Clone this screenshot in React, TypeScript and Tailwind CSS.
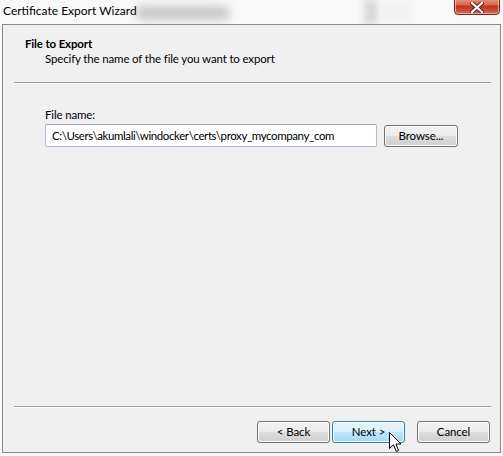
import React from "react";

const font = { fontFamily: 'Lato, "Noto Sans", sans-serif' };

function Btn({ children, hot, className = "" }: { children: React.ReactNode; hot?: boolean; className?: string }) {
  return (
    <div
      className={
        "flex h-[22px] w-[73px] items-center justify-center rounded-[3px] border text-[11.5px] tracking-[-0.1px] text-black shadow-[inset_0_0_0_1px_#fcfcfc] " +
        (hot
          ? "border-[#3c7fb1] bg-[linear-gradient(to_bottom,#eaf6fd_0%,#d9f0fc_50%,#bee6fd_50%,#a7d9f5_100%)] "
          : "border-[#707070] bg-[linear-gradient(to_bottom,#f2f2f2_0%,#ebebeb_50%,#dddddd_50%,#cfcfcf_100%)] ") +
        className
      }
    >
      {children}
    </div>
  );
}

export default function App() {
  return (
    <div className="relative h-[456px] w-[503px] overflow-hidden bg-[#f7f7f7]" style={font}>
      {/* title bar */}
      <div className="relative flex h-[24px] items-center overflow-hidden bg-[#f8f8f8]">
        <div className="absolute left-[135px] top-[6px] h-[14px] w-[95px] rounded-full bg-[#c9c9c9] blur-[4px]" />
        <div className="absolute left-[365px] top-0 h-[24px] w-[12px] bg-[#d2d2d2] blur-[4px]" />
        <div className="absolute left-[382px] top-0 h-[24px] w-[30px] bg-[#f2f2f2] blur-[3px]" />
        <span className="relative ml-[3px] -mt-[3px] text-[12px] text-black">Certificate Export Wizard</span>
        <div className="absolute left-[454px] top-[-4px] flex h-[19px] w-[46px] items-center justify-center rounded-b-[4px] border border-[#6e2a20] bg-[linear-gradient(to_bottom,#e9a99b_0%,#d7664f_45%,#c2341c_55%,#d0685a_100%)] shadow-[inset_0_0_0_1px_rgba(255,220,210,0.6)]">
          <svg width="14" height="11" viewBox="0 0 14 11" className="mt-[4px]">
            <path d="M2 1 L12 10 M12 1 L2 10" stroke="#5a1a10" strokeWidth="4" strokeLinecap="square" />
            <path d="M2 1 L12 10 M12 1 L2 10" stroke="#ffffff" strokeWidth="2.2" strokeLinecap="square" />
          </svg>
        </div>
      </div>

      {/* dialog */}
      <div className="ml-[2px] flex h-[429px] w-[499px] flex-col border border-[#8a8a8a] bg-[#f0f0f0]">
        <div className="h-[57px] pt-[11px] text-[11.5px] leading-[15px] tracking-[-0.15px] text-black">
          <div className="ml-[22px] font-bold">File to Export</div>
          <div className="ml-[42px]">Specify the name of the file you want to export</div>
        </div>
        <div className="ml-[11px] h-[2px] w-[477px] border-t border-[#a0a0a0] bg-white" />

        <div className="ml-[42px] mt-[23px] text-[11.5px] leading-[16px] tracking-[-0.15px] text-black">File name:</div>
        <div className="ml-[42px] mt-[1px] flex items-start">
          <div className="flex h-[23px] w-[332px] items-center rounded-[2px] border border-[#a9bdd6] border-t-[#95a9c4] bg-white pl-[6px] text-[11.5px] tracking-[-0.4px] text-black">
            C:\Users\akumlali\windocker\certs\proxy_mycompany_com
          </div>
          <Btn className="ml-[7px] mt-[1px] h-[21px] w-[74px]">Browse...</Btn>
        </div>

        <div className="flex-1" />

        <div className="ml-[11px] h-[2px] w-[477px] border-t border-[#a0a0a0] bg-white" />
        <div className="mb-[9px] mr-[10px] mt-[13px] flex justify-end">
          <Btn>&lt; Back</Btn>
          <Btn hot className="ml-[2px]">Next &gt;</Btn>
          <Btn className="ml-[12px]">Cancel</Btn>
        </div>
      </div>

      {/* mouse cursor */}
      <svg className="absolute left-[389px] top-[432px]" width="13" height="21" viewBox="0 0 13 21">
        <path d="M0.5 0.5 L0.5 16.5 L4.5 12.8 L7.3 19.5 L9.6 18.5 L6.9 12 L12 12 Z" fill="#ffffff" stroke="#000000" strokeWidth="1" strokeLinejoin="miter" />
      </svg>
    </div>
  );
}
